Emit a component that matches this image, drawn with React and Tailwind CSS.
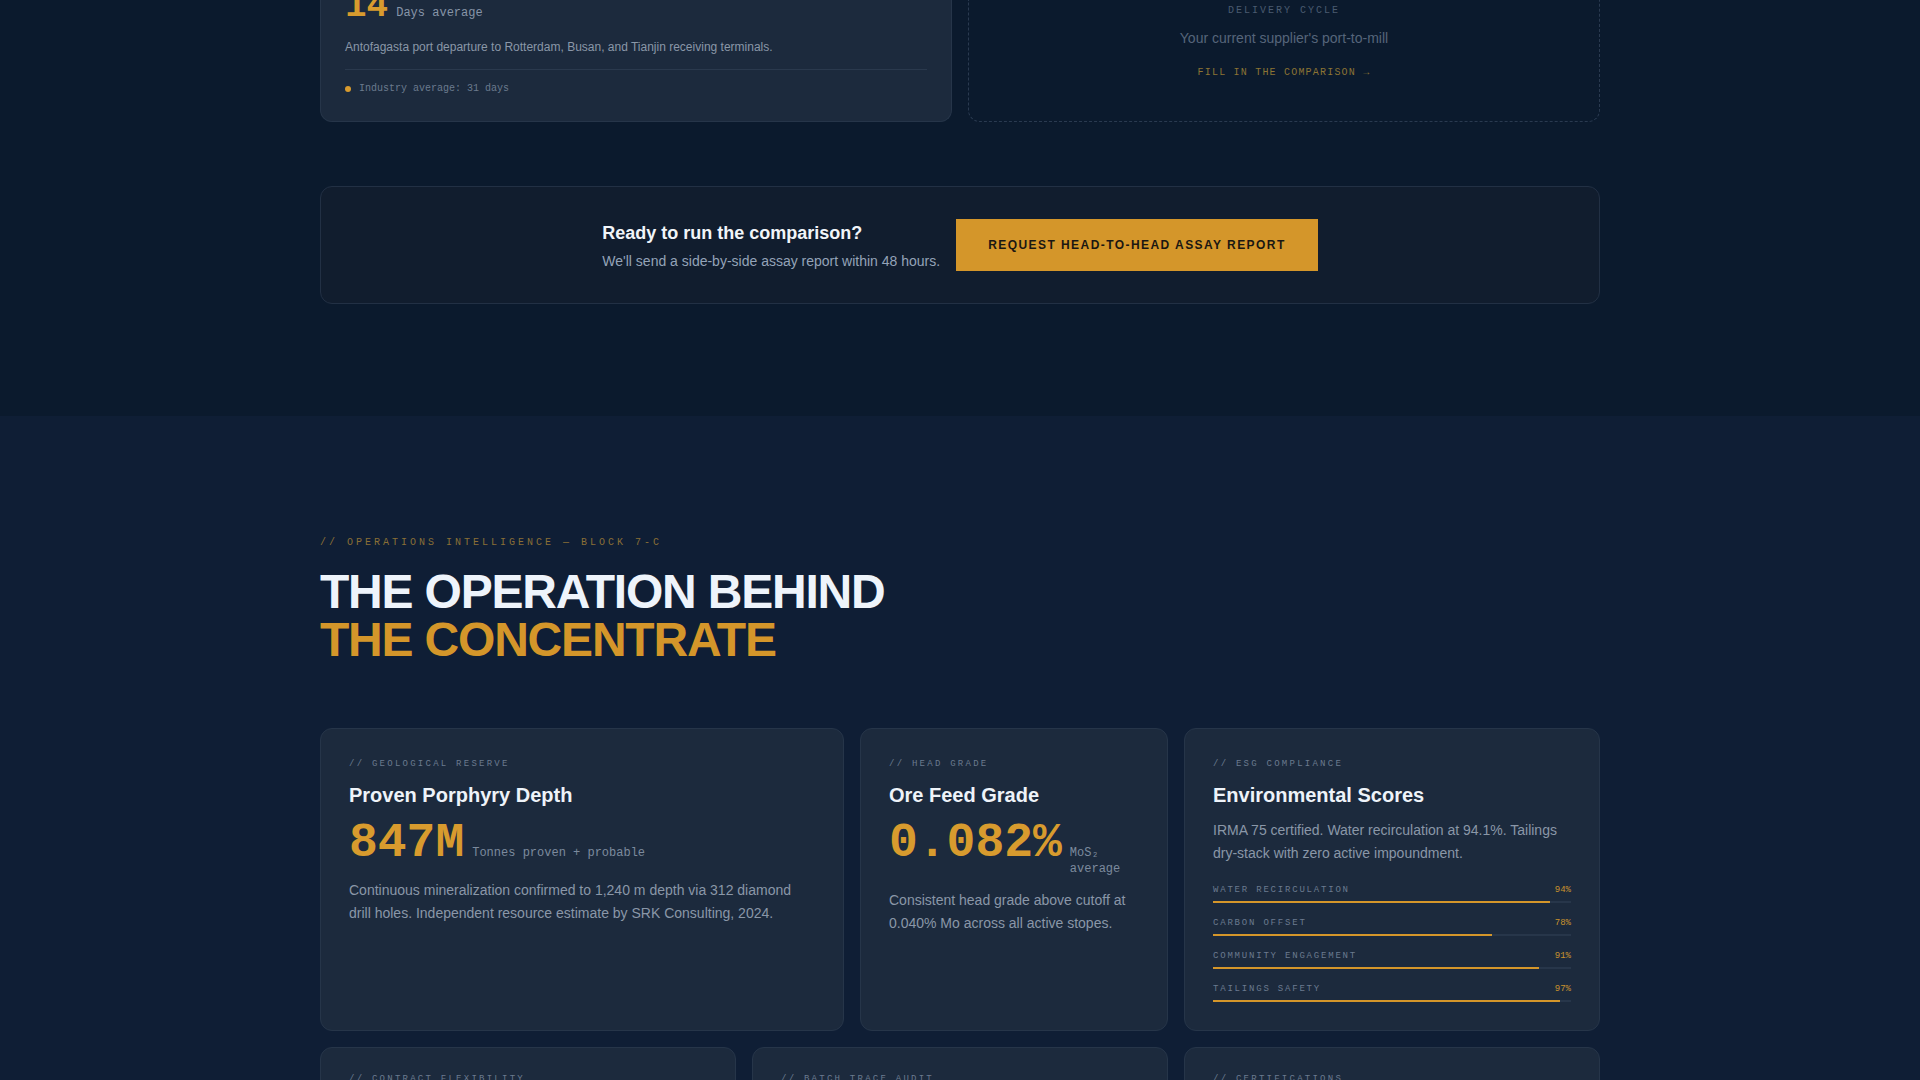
import React from "react";

const mono = "font-['Liberation_Mono',monospace]";

const esgBars = [
  { label: "Water recirculation", value: 94 },
  { label: "Carbon offset", value: 78 },
  { label: "Community engagement", value: 91 },
  { label: "Tailings safety", value: 97 },
];

const Card = ({ className = "", children }) => (
  <div className={`rounded-xl border border-[#263549] bg-[#1c2a3d] p-7 ${className}`}>{children}</div>
);

const CardLabel = ({ children }) => (
  <div className={`${mono} text-[9px] leading-[14px] uppercase tracking-[0.25em] text-[#6b7a8f]`}>{children}</div>
);

const CardTitle = ({ children }) => (
  <h3 className="mt-2.5 text-xl leading-7 font-semibold text-[#eef3f9]">{children}</h3>
);

const BigStat = ({ value, unit }) => (
  <div className="mt-[10px] flex items-baseline gap-2">
    <span className={`${mono} text-5xl leading-none font-bold text-[#d89b2e]`}>{value}</span>
    <span className={`${mono} text-xs leading-4 text-[#7c8a9e]`}>{unit}</span>
  </div>
);

const CardText = ({ className = "", children }) => (
  <p className={`text-sm leading-[23px] text-[#8a97a8] ${className}`}>{children}</p>
);

export default function App() {
  return (
    <div className="min-h-screen bg-[#0b1a2d] font-['Liberation_Sans',Arial,sans-serif]">
      {/* comparison tail + CTA */}
      <section className="bg-[#0b1a2d] pb-28">
        <div className="mx-auto max-w-[1280px]">
          <div className="grid grid-cols-2 gap-4">
            <div className="rounded-b-xl border border-t-0 border-[#263549] bg-[#1c2a3d] px-6 pb-[25px]">
              <div className="-mt-[11px] flex items-baseline gap-2">
                <span className={`${mono} text-4xl leading-none font-bold text-[#d89b2e]`}>14</span>
                <span className={`${mono} text-xs text-[#8795a8]`}>Days average</span>
              </div>
              <p className="mt-[14px] text-xs leading-4 text-[#8a97a8]">
                Antofagasta port departure to Rotterdam, Busan, and Tianjin receiving terminals.
              </p>
              <div className="mt-[14px] flex items-center gap-2 border-t border-[#2a394d] pt-3">
                <span className="h-1.5 w-1.5 rounded-full bg-[#d89b2e]" />
                <span className={`${mono} text-[10px] leading-[14px] text-[#6b7a8e]`}>Industry average: 31 days</span>
              </div>
            </div>

            <div className="flex flex-col items-center justify-end rounded-b-xl border border-t-0 border-dashed border-[#2a3a50] pb-[41px]">
              <div className={`${mono} text-[10px] leading-[14px] uppercase tracking-[0.2em] text-[#4a5a70]`}>Delivery cycle</div>
              <div className="mt-[10px] text-sm leading-5 text-[#56657a]">Your current supplier's port-to-mill</div>
              <div className={`${mono} mt-[18px] text-[10px] leading-[14px] uppercase tracking-[0.12em] text-[#8c7434]`}>
                Fill in the comparison →
              </div>
            </div>
          </div>

          <div className="mt-16 flex items-center justify-center gap-4 rounded-xl border border-[#223044] bg-[#111d2e] py-8">
            <div>
              <h3 className="text-lg leading-7 font-bold text-[#f1f5f9]">Ready to run the comparison?</h3>
              <p className="mt-1 text-sm leading-5 text-[#94a3b8]">We'll send a side-by-side assay report within 48 hours.</p>
            </div>
            <button className="bg-[#d4962a] px-8 py-[18px] text-xs leading-4 font-bold uppercase tracking-[0.12em] text-[#1a1712]">
              Request head-to-head assay report
            </button>
          </div>
        </div>
      </section>

      {/* operations */}
      <section className="bg-[#0f1e35] pt-[120px] pb-24">
        <div className="mx-auto max-w-[1280px]">
          <div className={`${mono} text-[10px] leading-[14px] uppercase tracking-[0.3em] text-[#8a6f36]`}>
            // Operations intelligence — Block 7-C
          </div>
          <h2 className="mt-[18px] text-5xl leading-none font-bold tracking-tight uppercase">
            <span className="block text-[#eef4fb]">The operation behind</span>
            <span className="block text-[#d4962a]">The concentrate</span>
          </h2>

          <div className="mt-16 grid grid-cols-12 gap-4">
            <Card className="col-span-5">
              <CardLabel>// Geological reserve</CardLabel>
              <CardTitle>Proven Porphyry Depth</CardTitle>
              <BigStat value="847M" unit="Tonnes proven + probable" />
              <CardText className="mt-3">
                Continuous mineralization confirmed to 1,240 m depth via 312 diamond drill holes. Independent resource estimate by SRK Consulting, 2024.
              </CardText>
            </Card>

            <Card className="col-span-3">
              <CardLabel>// Head grade</CardLabel>
              <CardTitle>Ore Feed Grade</CardTitle>
              <BigStat value="0.082%" unit="MoS₂ average" />
              <CardText className="mt-3">
                Consistent head grade above cutoff at 0.040% Mo across all active stopes.
              </CardText>
            </Card>

            <Card className="col-span-4">
              <CardLabel>// ESG compliance</CardLabel>
              <CardTitle>Environmental Scores</CardTitle>
              <CardText className="mt-[10px]">
                IRMA 75 certified. Water recirculation at 94.1%. Tailings dry-stack with zero active impoundment.
              </CardText>
              <div className="mt-[19px] space-y-[14px]">
                {esgBars.map((b) => (
                  <div key={b.label}>
                    <div className={`${mono} flex justify-between text-[9px] leading-3`}>
                      <span className="uppercase tracking-[0.2em] text-[#6b7a8f]">{b.label}</span>
                      <span className="text-[#c9922e]">{b.value}%</span>
                    </div>
                    <div className="mt-[5px] h-0.5 bg-[#27364a]">
                      <div className="h-full bg-[#d4962a]" style={{ width: `${b.value}%` }} />
                    </div>
                  </div>
                ))}
              </div>
            </Card>

            <Card className="col-span-4 pt-6">
              <CardLabel>// Contract flexibility</CardLabel>
              <CardTitle>Offtake Terms</CardTitle>
              <CardText className="mt-2">Spot, quarterly and multi-year frame agreements with price-linked adjustment.</CardText>
            </Card>
            <Card className="col-span-4 pt-6">
              <CardLabel>// Batch trace audit</CardLabel>
              <CardTitle>Lot Traceability</CardTitle>
              <CardText className="mt-2">Every shipment sealed, sampled and logged from stope to vessel hold.</CardText>
            </Card>
            <Card className="col-span-4 pt-6">
              <CardLabel>// Certifications</CardLabel>
              <CardTitle>Standards Held</CardTitle>
              <CardText className="mt-2">ISO 9001, ISO 14001, ISO 45001 and LME responsible sourcing.</CardText>
            </Card>
          </div>
        </div>
      </section>
    </div>
  );
}
